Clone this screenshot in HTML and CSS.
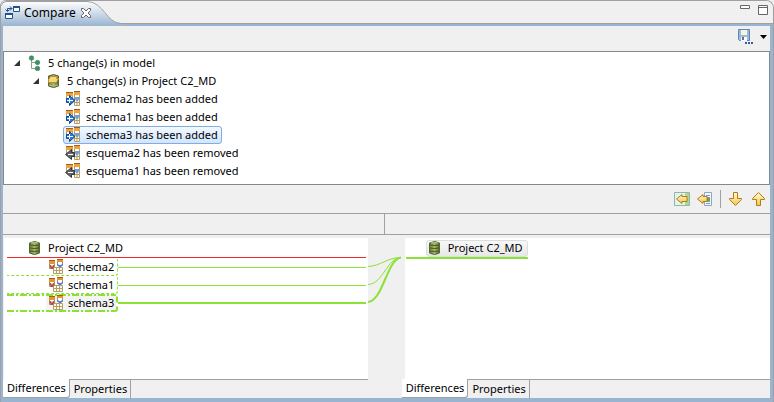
FILE: index.html
```html
<!DOCTYPE html>
<html lang="en">
<head>
<meta charset="utf-8">
<title>Compare</title>
<link rel="stylesheet" href="styles.css">
</head>
<body>
<svg class="defs" aria-hidden="true">
  <defs>
    <linearGradient id="gold" x1="0" y1="0" x2="0" y2="1"><stop offset="0" stop-color="#fffbd0"/><stop offset="1" stop-color="#f6c64a"/></linearGradient>
    <linearGradient id="olive"><stop offset="0" stop-color="#6c8436"/><stop offset=".5" stop-color="#a5b86a"/><stop offset="1" stop-color="#566c28"/></linearGradient>
    <symbol id="tables" viewBox="0 0 16 16">
      <path d="M1.500 2.500h5v7h-5zM9.500 1.500h5v5h-5z" fill="#fff" stroke="#a08a72"/>
      <path d="M1 1h6v4H1zM9 0h6v3H9z" fill="#e3942f"/><path d="M1 1h6v1H1zM9 0h6v1H9z" fill="#a85c14"/>
      <path d="M5.500 8.500h9v6h-9zM8.500 8.500v6M11.500 8.500v6M5.500 11.500h9" fill="#fffdf2" stroke="#b59d68"/>
      <path d="M9 5h1l1 1h2l1-1h1v1l-2 2h-2L9 6z" fill="#5280cf"/><path d="M2 6h1l1 2 1-2h1v2L5 10H3L2 8z" fill="#c0453c"/>
    </symbol>
    <symbol id="change" viewBox="0 0 16 16">
      <path d="M1.500 2.500h6v6h-6zM9.500 1.500h5v13h-5zM12 8v6M9.500 11.500h5" fill="#fffdf2" stroke="#b39b65"/>
      <path d="M1 1h7v4H1zM9 0h6v4H9z" fill="#eda23d"/><path d="M1 1h7v1H1zM9 0h6v1H9z" fill="#a85c14"/>
      <path d="M9 6h6l-2 4h-2z" fill="#6fa0e0"/>
    </symbol>
    <symbol id="added" viewBox="0 0 16 16"><use href="#change"/><path d="M1.500 7.500h3v-3L10 9.500l-5.500 5v-3h-3z" fill="#287bd2" stroke="#14448f"/><path d="M2 9.500h6M4.500 7v5" stroke="#fff"/></symbol>
    <symbol id="removed" viewBox="0 0 16 16"><use href="#change"/><path d="M9.500 7.500h-3v-3L.500 9.500l6 5v-3h3z" fill="#62656c" stroke="#35373d"/><path d="M3 9.500h5" stroke="#fff"/></symbol>
    <symbol id="database" viewBox="0 0 16 16"><path d="M2.500 3q5.500-3 10 0v10q-5 3-10 0z" fill="url(#olive)" stroke="#53662d"/><path d="M3 5q5 1 9 0M3 8q5 1 9 0M3 11q5 1 9 0" fill="none" stroke="#45551f"/><path d="M4 3q4-1 7 0" fill="none" stroke="#b8c68a"/></symbol>
    <symbol id="arrow-down" viewBox="0 0 16 16"><path d="M5.500 1.500h4v6h4v1L7.500 14.500 1.500 8.500v-1h4z" fill="url(#gold)" stroke="#b17b18"/></symbol>
    <symbol id="arrow-up" viewBox="0 0 16 16"><path d="M5.500 14.500h4v-6h4v-1L7.500 1.500 1.500 7.500v1h4z" fill="url(#gold)" stroke="#b17b18"/></symbol>
  </defs>
</svg>
<main class="view">
  <header class="tabbar">
    <svg class="tab-shape" viewBox="0 0 125 25" aria-hidden="true">
      <defs><linearGradient id="tabfill" x1="0" y1="0" x2="0" y2="1"><stop offset="0" stop-color="#fff"/><stop offset="1" stop-color="#99b4d1"/></linearGradient></defs>
      <path d="M0 25V4Q1 1 5 .5H86C103 1 105 22 120 22.500H125V25z" fill="url(#tabfill)"/><path d="M0 5Q1 1 5 .5H86C103 1 105 22 120 22.500H125" fill="none" stroke="#a0a0a0"/>
    </svg>
    <div class="tab-label">
      <svg class="icon" viewBox="0 0 16 16"><path d="M8.500 1.500h6v5h-6zM.500 8.500h7v5h-7z" fill="#fff" stroke="#23508f"/><path d="M8 1h7v2H8zM0 8h8v2H0z" fill="#23508f"/><path d="M2.500 6V3.500H7M.500 4.500l2 2 2-2M5 1.500l2 2-2 2" fill="none" stroke="#23508f"/></svg>
      <h1>Compare</h1>
      <button class="plain" aria-label="Close Compare"><svg class="close" viewBox="0 0 12 12"><path d="M1.500 1.500h2L6 4l2.500-2.500h2v2L8 6l2.500 2.500v2h-2L6 8l-2.500 2.500h-2v-2L4 6 1.500 3.500z" fill="#fff" stroke="#666"/></svg></button>
    </div>
    <div class="window-buttons">
      <button class="plain" aria-label="Minimize"><svg class="small" viewBox="0 0 10 10"><path d="M.500 .500h9v3h-9z" fill="#fff" stroke="#666"/></svg></button>
      <button class="plain" aria-label="Maximize"><svg class="small" viewBox="0 0 10 10"><path d="M.500 .500h9v9h-9zM0 2.500h10" fill="#fff" stroke="#666"/></svg></button>
    </div>
  </header>
  <div class="content">
    <div class="toolbar save-tools">
      <button class="plain" aria-label="Save"><svg class="icon" viewBox="0 0 16 16"><path d="M1.500 .500h11v11h-10l-1-1z" fill="#9cb8dc" stroke="#6485b2"/><path d="M4 1h6v5H4z" fill="#f9f5d7"/><path d="M4 8h6v4H4z" fill="#fff"/><path d="M5 8h2v3H5z" fill="#52739f"/><path d="M8 13h2v2H8zM11 13h2v2h-2zM14 13h2v2h-2z" fill="#315fa9"/></svg></button>
      <button class="plain" aria-label="Save options"><svg class="caret" viewBox="0 0 7 4"><path d="M0 0h7L3.500 4z"/></svg></button>
    </div>
    <ul class="tree">
      <li class="level0"><svg class="expander" viewBox="0 0 6 6"><path d="M6 0v6H0z" fill="#333"/></svg><svg class="icon" viewBox="0 0 16 16"><path d="M4.500 4v9.500H11M4.500 7.500H11" fill="none" stroke="#89a09a"/><g fill="#3f9460" stroke="#2e7550" stroke-width=".5"><circle cx="4.500" cy="3" r="2.300"/><circle cx="10.500" cy="7.500" r="2.300"/><circle cx="10.500" cy="13.500" r="2.300"/></g></svg><span>5 change(s) in model</span></li>
      <li class="level1"><svg class="expander" viewBox="0 0 6 6"><path d="M6 0v6H0z" fill="#333"/></svg><svg class="icon" viewBox="0 0 16 16"><path d="M2.500 3q5-3 10 0v10q-5 3-10 0z" fill="url(#olive)" stroke="#53662d"/><path d="M2.500 6.500l2-3h7l-1 2h2l-2 4h-8z" fill="#f5d77d" stroke="#c48b2e"/><path d="M3 12q5 2 9 0" fill="none" stroke="#b8c68a"/></svg><span>5 change(s) in Project C2_MD</span></li>
      <li class="level2"><svg class="icon"><use href="#added"/></svg><span>schema2 has been added</span></li>
      <li class="level2"><svg class="icon"><use href="#added"/></svg><span>schema1 has been added</span></li>
      <li class="level2 selected"><svg class="icon"><use href="#added"/></svg><span>schema3 has been added</span></li>
      <li class="level2"><svg class="icon"><use href="#removed"/></svg><span>esquema2 has been removed</span></li>
      <li class="level2"><svg class="icon"><use href="#removed"/></svg><span>esquema1 has been removed</span></li>
    </ul>
    <div class="toolbar merge-tools">
      <button class="plain" aria-label="Copy all to left"><svg class="icon" viewBox="0 0 16 16"><path d="M.500 1.500h15v13H.500z" fill="#e5f3ee" stroke="#8fb6a7"/><path d="M11 2h4v12h-4z" fill="#b5d58e"/><path d="M2.500 8L8 3.500v2h5v5H8v2z" fill="url(#gold)" stroke="#b17b18"/></svg></button>
      <button class="plain" aria-label="Copy change to left"><svg class="icon" viewBox="0 0 16 16"><path d="M7.500 1.500h7v13h-7z" fill="#f5f8fc" stroke="#8fa5c8"/><path d="M9 4.500h4M9 6.500h4M9 10.500h4M9 12.500h4" stroke="#7d98c4"/><path d="M10 7h3v3h-3z" fill="#69a344"/><path d="M.500 8L6 3.500v2h4v5H6v2z" fill="url(#gold)" stroke="#b17b18"/></svg></button>
      <span class="divider"></span>
      <button class="plain" aria-label="Next difference"><svg class="icon"><use href="#arrow-down"/></svg></button>
      <button class="plain" aria-label="Previous difference"><svg class="icon"><use href="#arrow-up"/></svg></button>
    </div>
    <div class="headings"><span></span><span></span></div>
    <div class="compare">
      <section class="side left">
        <div class="pane">
          <div class="project"><svg class="icon"><use href="#database"/></svg><span>Project C2_MD</span></div>
          <div class="schema"><div class="box"><svg class="icon"><use href="#tables"/></svg><span>schema2</span></div></div>
          <div class="schema"><div class="box"><svg class="icon"><use href="#tables"/></svg><span>schema1</span></div></div>
          <div class="schema current"><div class="box"><svg class="icon"><use href="#tables"/></svg><span>schema3</span></div></div>
        </div>
        <nav class="tabs"><button class="active">Differences</button><button>Properties</button></nav>
      </section>
      <svg class="links" viewBox="0 0 34 70" aria-hidden="true"><g fill="none" stroke="#8ae234"><path d="M0 31.500C13 31 19 22.500 33 22.500M0 49.500C15 49 19 23 33 22.500"/><path d="M0 67C15 66 19 24 33 22.500" stroke-width="2"/></g></svg>
      <section class="side right">
        <div class="pane"><div class="project"><span class="chip"><svg class="icon"><use href="#database"/></svg><span>Project C2_MD</span></span></div></div>
        <nav class="tabs"><button class="active">Differences</button><button>Properties</button></nav>
      </section>
    </div>
  </div>
</main>
</body>
</html>
```
FILE: styles.css
```css
* { box-sizing: border-box; }
body { margin: 0; background: #f0f0f0; color: #000; font: 11px/18px "Noto Sans", "Open Sans", sans-serif; }
svg { display: block; flex: none; }
.defs { position: absolute; width: 0; height: 0; }
.view { display: flex; flex-direction: column; min-height: 100vh; border: 1px solid #a0a0a0; border-bottom: 0; border-radius: 6px 8px 0 0; background: #f0f0f0; overflow: hidden; }
.icon { width: 16px; height: 16px; }
.plain { padding: 0; border: 0; background: none; }
.tabbar { position: relative; display: flex; justify-content: space-between; height: 25px; background: linear-gradient(#f0f0f0 22px, #a0a0a0 22px, #a0a0a0 23px, #99b4d1 23px); }
.tab-shape { position: absolute; left: 0; top: 0; width: 125px; height: 25px; }
.tab-label { position: relative; display: flex; align-items: center; gap: 3px; height: 23px; padding-left: 4px; }
h1 { margin: 0; font-size: 12px; font-weight: 400; }
.tab-label .plain { margin-left: 1px; }
.close { width: 12px; height: 12px; }
.window-buttons { display: flex; align-items: flex-start; gap: 8px; padding: 4px 5px; }
.small { width: 10px; height: 10px; }
.content { flex: 1; display: flex; flex-direction: column; border: solid #99b4d1; border-width: 0 3px 4px 2px; }
.toolbar { display: flex; align-items: center; justify-content: flex-end; }
.save-tools { height: 25px; gap: 7px; padding: 0 3px 3px 0; }
.caret { width: 7px; height: 4px; }
.tree { margin: 0; padding: 2px 0 4px; border: 1px solid #828790; background: #fff; list-style: none; }
.tree li { display: flex; align-items: center; width: max-content; height: 18px; padding-right: 3px; border: 1px solid transparent; border-radius: 3px; }
.tree .icon { margin-right: 5px; }
.expander { width: 6px; height: 6px; margin-right: 7px; }
.level0 { margin-left: 9px; }
.level1 { margin-left: 28px; }
.level2 { margin-left: 59px; padding-left: 1px; }
.tree .selected { border-color: #84acdd; background: linear-gradient(#f2f8ff, #d0e5ff); }
.merge-tools { height: 28px; gap: 7px; padding-right: 3px; }
.divider { width: 1px; height: 18px; background: #a0a0a0; }
.headings { display: flex; height: 22px; border: solid #a0a0a0; border-width: 1px 0; }
.headings span { flex: 1; }
.headings span:first-child { flex: .99; }
.headings span + span { border-left: 1px solid #a0a0a0; }
.compare { flex: 1; display: flex; }
.side { flex: 1; display: flex; flex-direction: column; min-width: 0; }
.left { flex: .99; }
.pane { flex: 1; padding: 2px 2px 0 3px; border-top: 3px solid #f0f0f0; background: #fff; }
.left .pane { border-left: 1px solid #f0f0f0; }
.right .pane { padding: 1px 0 0 1px; border-left: 3px solid #f0f0f0; }
.project { display: flex; align-items: center; gap: 5px; height: 18px; }
.left .project { padding: 0 0 1px 20px; border-bottom: 1px solid #ef2929; }
.right .project { width: 122px; height: 20px; padding-left: 20px; border-bottom: 2px solid #8ae234; }
.chip { display: flex; align-items: center; gap: 5px; height: 17px; padding-right: 4px; border: 1px solid #ddd; border-radius: 3px; background: linear-gradient(#f8f8f8, #e7e7e7); white-space: nowrap; }
.schema { display: flex; align-items: center; height: 18px; }
.box { display: flex; align-items: center; gap: 4px; width: 111px; height: 18px; padding-left: 41px; border: dashed #8ae234; border-width: 0 1px 1px 0; border-radius: 0 3px 3px 0; }
.schema::after { content: ""; flex: 1; height: 1px; background: #8ae234; }
.current .box {
  --dash: repeating-linear-gradient(90deg, #8ae234 0 7px, transparent 7px 9px, #8ae234 9px 11px, transparent 11px 13px);
  border-width: 0 2px 0 0;
  background: var(--dash) top / 100% 2px no-repeat, var(--dash) bottom / 100% 2px no-repeat, linear-gradient(90deg, transparent 39px, #f3f3f3 39px);
}
.current::after { height: 2px; }
.links { width: 34px; height: 70px; }
.tabs { display: flex; height: 19px; border-top: 1px solid #a0a0a0; }
.tabs button { height: 18px; padding: 0 3px 0 4px; border: 0; border-right: 1px solid #a0a0a0; background: none; font: inherit; line-height: 18px; }
.tabs .active { margin-top: -1px; height: 19px; background: #fff; border-bottom: 1px solid #a0a0a0; border-bottom-right-radius: 3px; }
```
